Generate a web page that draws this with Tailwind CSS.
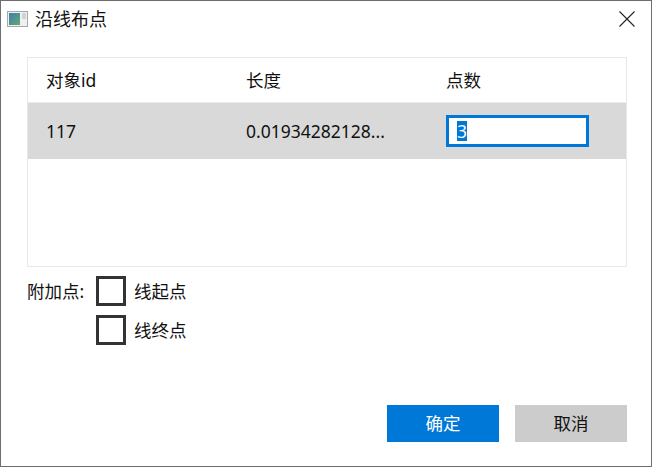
<!DOCTYPE html>
<html lang="zh-CN">
<head>
<meta charset="utf-8">
<script src="https://cdn.jsdelivr.net/npm/@tailwindcss/browser@4"></script>
</head>
<body class="bg-white w-[654px] h-[469px] overflow-hidden font-['Noto_Sans','Noto_Sans_CJK_SC',sans-serif] text-[17.5px] text-[#111]">
<div class="w-[652px] h-[467px] border border-[#6e6e6e] bg-white flex flex-col">
  <header class="h-[36px] flex items-center pl-[5px] pr-[16px] shrink-0">
    <svg class="w-[24px] h-[20px] shrink-0" viewBox="0 0 24 20">
      <defs><linearGradient id="g" x1="0" y1="0" x2="1" y2="1"><stop offset="0" stop-color="#3f7fa8"/><stop offset="1" stop-color="#62a878"/></linearGradient></defs>
      <rect x="1.5" y="2.5" width="20" height="15" fill="#f0f0f0" stroke="#a8a8a8"/>
      <rect x="3" y="4" width="11" height="12" fill="url(#g)"/>
      <rect x="16" y="4" width="4" height="6" fill="#cfd4d2"/>
    </svg>
    <span class="ml-[5px] text-[18px] leading-none">沿线布点</span>
    <svg class="ml-auto w-[16px] h-[16px]" viewBox="0 0 16 16"><path d="M0.5 0.5L15.5 15.5M15.5 0.5L0.5 15.5" stroke="#222" stroke-width="1.1" fill="none"/></svg>
  </header>
  <main class="flex-1 flex flex-col pl-[26px] pr-[24px]">
    <div class="mt-[20px] h-[210px] border border-[#e8e8e8] flex flex-col shrink-0">
      <div class="h-[45px] grid grid-cols-[200px_200px_1fr] items-center pl-[18px] border-b border-[#ececec] shrink-0">
        <span>对象id</span><span>长度</span><span>点数</span>
      </div>
      <div class="h-[56px] grid grid-cols-[200px_200px_1fr] items-center pl-[18px] bg-[#d9d9d9] shrink-0">
        <span>117</span>
        <span>0.01934282128...</span>
        <div class="w-[143px] h-[32px] border-[3px] border-[#0078d7] bg-white flex items-center pl-[8px]">
          <span class="bg-[#0078d7] text-white leading-[20px] h-[20px]">3</span>
        </div>
      </div>
    </div>
    <div class="mt-[9px] flex">
      <span class="w-[69px] h-[30px] flex items-center">附加点:</span>
      <div class="flex flex-col gap-[9px]">
        <label class="flex items-center gap-[8px]"><span class="w-[30px] h-[30px] border-[3px] border-[#333] bg-white"></span>线起点</label>
        <label class="flex items-center gap-[8px]"><span class="w-[30px] h-[30px] border-[3px] border-[#333] bg-white"></span>线终点</label>
      </div>
    </div>
    <div class="mt-auto mb-[24px] flex justify-end gap-[16px]">
      <button class="w-[112px] h-[37px] bg-[#0078d7] text-white">确定</button>
      <button class="w-[112px] h-[37px] bg-[#cccccc] text-[#111]">取消</button>
    </div>
  </main>
</div>
</body>
</html>
